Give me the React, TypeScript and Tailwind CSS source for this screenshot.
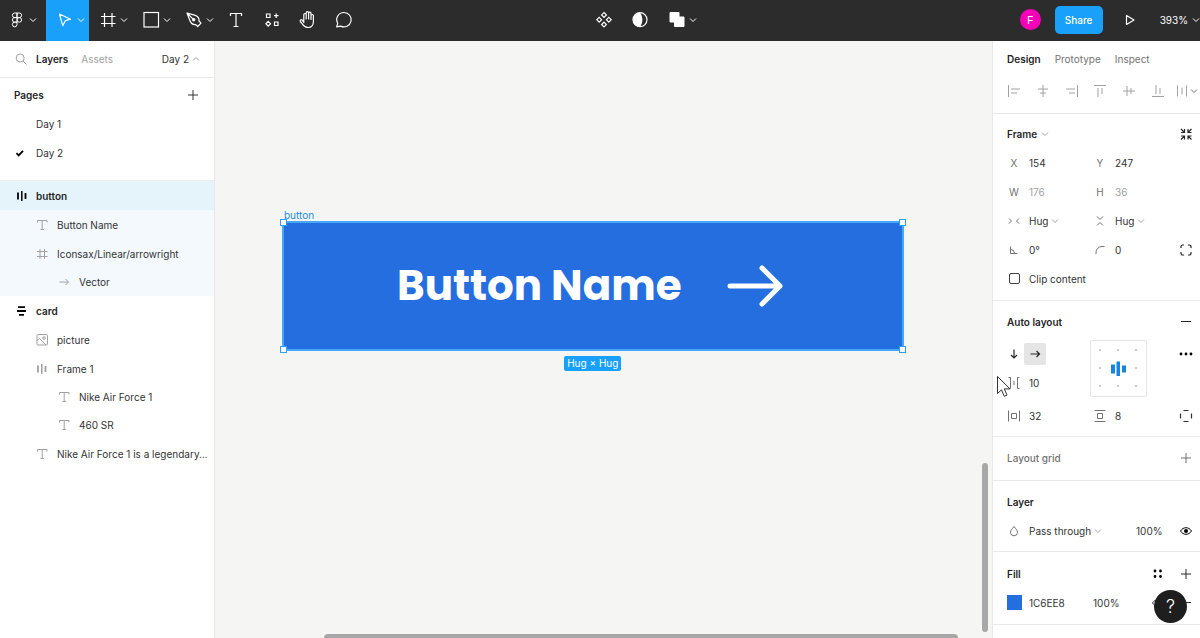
import React from 'react'
import clsx from 'clsx'

type IconProps = { className?: string }

function Chevron({ className = 'text-neutral-400', up = false }: IconProps & { up?: boolean }) {
  return (
    <svg viewBox="0 0 8 8" className={clsx('w-2 h-2 shrink-0', className)} fill="none" stroke="currentColor">
      <path d={up ? 'M1 5.500 4 2.500l3 3' : 'M1 2.500 4 5.500l3-3'} />
    </svg>
  )
}

function Icon({ className, children }: IconProps & { children: React.ReactNode }) {
  return (
    <svg viewBox="0 0 20 20" className={clsx('w-5 h-5 shrink-0', className)} fill="none" stroke="currentColor">
      {children}
    </svg>
  )
}

const TextIcon = ({ className }: IconProps) => (
  <Icon className={className}>
    <path d="M5.500 7.500v-2h9.500v2M10.200 5.500v9M8.500 14.500h3.500" />
  </Icon>
)

const HashIcon = ({ className }: IconProps) => (
  <Icon className={className}>
    <path d="M8 5v10M12.500 5v10M5 7.500h10.500M5 12.500h10.500" />
  </Icon>
)

const BarsIcon = ({ className }: IconProps) => (
  <Icon className={className}>
    <path d="M6 6.500v7M13.500 7v6" strokeWidth="1.800" />
    <path d="M9.800 5v10" strokeWidth="1.500" />
  </Icon>
)

const StackIcon = ({ className }: IconProps) => (
  <Icon className={className}>
    <path d="M6 6.200h7M5 10h9M7 13.800h5" strokeWidth="1.800" />
  </Icon>
)

const ArrowIcon = ({ className }: IconProps) => (
  <Icon className={className}>
    <path d="M5.500 10h9M11.500 7l3 3-3 3" />
  </Icon>
)

const PictureIcon = ({ className }: IconProps) => (
  <Icon className={className}>
    <rect x="5" y="4.500" width="10.500" height="10.500" rx="1" />
    <circle cx="12" cy="8" r="1.300" />
    <path d="M5 10.500l2.500-2 6.500 6.500" />
  </Icon>
)

const PlusIcon = ({ className }: IconProps) => (
  <Icon className={className}>
    <path d="M10 5v10M5 10h10" />
  </Icon>
)

const MinusIcon = ({ className }: IconProps) => (
  <Icon className={className}>
    <path d="M5 9.500h10" />
  </Icon>
)

const EyeIcon = ({ className }: IconProps) => (
  <Icon className={className}>
    <path d="M4.500 10c2.700-4.400 8.300-4.400 11 0-2.700 4.400-8.300 4.400-11 0z" />
    <circle cx="10" cy="10" r="2" fill="currentColor" stroke="none" />
  </Icon>
)

const tools = [
  {
    name: 'Main menu',
    menu: true,
    icon: (
      <>
        <path d="M10 3H7.700a2.300 2.300 0 0 0 0 4.600H10zM10 3h2.300a2.300 2.300 0 0 1 0 4.600H10zM10 7.600H7.700a2.300 2.300 0 0 0 0 4.600H10zM10 12.200H7.700A2.300 2.300 0 1 0 10 14.500z" />
        <circle cx="12.300" cy="9.900" r="2.300" />
      </>
    ),
  },
  { name: 'Move', menu: true, active: true, icon: <path d="M4.500 4l11 5.200-5.200 1.500-2.600 5z" strokeWidth="1.200" strokeLinejoin="round" /> },
  { name: 'Frame', menu: true, icon: <path d="M6.500 3v14M14 3v14M3 6.500h14.500M3 13.500h14.500" strokeWidth="1.200" /> },
  { name: 'Rectangle', menu: true, icon: <rect x="3" y="2.500" width="14.500" height="14.500" strokeWidth="1.200" /> },
  {
    name: 'Pen',
    menu: true,
    icon: (
      <>
        <path d="M3 3l7.500 2.200c3.200 1 4.800 3.300 4.500 5.800l2 2.200-3.300 3.300-2.200-2c-2.500.3-4.800-1.300-5.800-4.500zM3 3l5.800 5.800" strokeWidth="1.200" strokeLinejoin="round" />
        <circle cx="9.700" cy="9.700" r="1.300" fill="currentColor" />
      </>
    ),
  },
  { name: 'Text', icon: <path d="M4.500 6V3.500h11V6M10 3.500v13M7.500 16.500h5" strokeWidth="1.200" /> },
  {
    name: 'Resources',
    icon: (
      <>
        <path d="M4.500 4h3.500v3.500H4.500zM12.500 12h3.500v3.500h-3.500zM14.200 3.500v4.500M12 5.700h4.500" strokeWidth="1.200" />
        <path d="M6.200 11.300l2.300 2.400-2.300 2.400-2.300-2.400z" strokeWidth="1.200" />
      </>
    ),
  },
  {
    name: 'Hand',
    icon: (
      <path
        d="M5.800 10.500V4.700a1.200 1.200 0 0 1 2.400 0V9 2.900a1.200 1.200 0 0 1 2.400 0V9 3.400a1.200 1.200 0 0 1 2.400 0V9.500 5.700a1.200 1.200 0 0 1 2.400 0v5.800c0 4-2 6-5.200 6-3 0-4.200-1.200-5.600-3.200L2.300 11.500c-.6-1.300.8-2.400 1.900-1.500l1.600 2.500z"
        strokeWidth="1.200"
        strokeLinejoin="round"
      />
    ),
  },
  { name: 'Comment', icon: <path d="M10 2.500a7.200 7.200 0 1 1-3.300 13.600L2.700 16.900l1-3.600A7.200 7.200 0 0 1 10 2.500z" strokeWidth="1.200" strokeLinejoin="round" /> },
]

const centerTools = [
  {
    name: 'Create component',
    icon: (
      <path
        d="M10 2.500l2.400 2.400L10 7.300 7.600 4.900zM10 12.100l2.400 2.400-2.400 2.400-2.400-2.400zM5.200 7.300L7.600 9.700l-2.400 2.400L2.800 9.700zM14.800 7.300l2.400 2.400-2.400 2.400-2.400-2.400z"
        strokeWidth="1.200"
      />
    ),
  },
  {
    name: 'Mask',
    icon: (
      <>
        <circle cx="10" cy="9.700" r="7" strokeWidth="1.200" />
        <path d="M10 2.700a7 7 0 0 0 0 14c3.200-3.500 3.200-10.500 0-14z" fill="currentColor" stroke="none" />
      </>
    ),
  },
  { name: 'Boolean groups', menu: true, icon: <path d="M3 2.500h9v4.500h5V16.500H7.500v-4.500H3z" fill="currentColor" strokeWidth="1" /> },
]

function ToolButton({ tool, first }: { tool: any; first?: boolean }) {
  return (
    <button
      aria-label={tool.name}
      className={clsx(
        'h-full flex items-center shrink-0 gap-0.5 pb-px',
        tool.menu ? (first ? 'w-[46px] pl-[7px]' : 'w-[43px] pl-[9px]') : 'w-9 justify-center',
        tool.active && 'bg-[#18a0fb]'
      )}
    >
      <Icon>{tool.icon}</Icon>
      {tool.menu && <Chevron className="text-white" />}
    </button>
  )
}

function Toolbar() {
  return (
    <header className="h-[41px] shrink-0 bg-[#2c2c2c] text-white flex items-center">
      <div className="h-full w-[calc(50%-14px)] flex">
        {tools.map((tool, index) => (
          <ToolButton key={tool.name} tool={tool} first={index === 0} />
        ))}
      </div>
      <div className="h-full flex">
        {centerTools.map((tool) => (
          <ToolButton key={tool.name} tool={tool} />
        ))}
      </div>
      <div className="h-full ml-auto pb-0.5 flex items-center">
        <span className="w-[21px] h-[21px] rounded-full bg-[#f500b8] flex items-center justify-center text-[11px]">F</span>
        <button className="ml-3.5 w-12 h-7 rounded-[5px] bg-[#18a0fb] font-medium">Share</button>
        <button aria-label="Present" className="ml-[17px] w-5">
          <Icon>
            <path d="M6.500 5.500v9l7.500-4.500z" strokeWidth="1.200" strokeLinejoin="round" />
          </Icon>
        </button>
        <button className="ml-5 flex items-center gap-1">
          393%
          <Chevron className="text-white" />
        </button>
      </div>
    </header>
  )
}

const layers = [
  { name: 'button', level: 0, icon: BarsIcon, tint: 'bg-[#e5f4fb]' },
  { name: 'Button Name', level: 1, icon: TextIcon, tint: 'bg-[#f3f9fd]' },
  { name: 'Iconsax/Linear/arrowright', level: 1, icon: HashIcon, tint: 'bg-[#f3f9fd]' },
  { name: 'Vector', level: 2, icon: ArrowIcon, tint: 'bg-[#f3f9fd]' },
  { name: 'card', level: 0, icon: StackIcon },
  { name: 'picture', level: 1, icon: PictureIcon },
  { name: 'Frame 1', level: 1, icon: BarsIcon },
  { name: 'Nike Air Force 1', level: 2, icon: TextIcon },
  { name: '460 SR', level: 2, icon: TextIcon },
  { name: 'Nike Air Force 1 is a legendary...', level: 1, icon: TextIcon },
]

const levelStyles = ['h-[29px] pl-3 font-semibold text-neutral-800', 'h-[29px] pl-8', 'h-7 pl-[54px]']

function LayersPanel() {
  return (
    <aside className="w-[215px] shrink-0 bg-white border-r border-[#e8e8e8]">
      <div className="h-[37px] flex items-center pl-3 pr-3.5 border-b border-[#e8e8e8]">
        <Icon className="text-neutral-400">
          <circle cx="8.200" cy="9" r="4" />
          <path d="M11 12l3.500 3.500" />
        </Icon>
        <button className="ml-1 font-semibold text-neutral-800">Layers</button>
        <button className="ml-[13px] text-neutral-400">Assets</button>
        <button className="ml-auto flex items-center gap-[3px]">
          Day 2 <Chevron up />
        </button>
      </div>

      <div className="pt-0.5 pb-[13px] border-b border-[#e8eef2]">
        <div className="h-[29px] flex items-center justify-between pl-3.5 pr-[11px]">
          <h2 className="font-semibold text-neutral-800">Pages</h2>
          <button aria-label="Add page">
            <PlusIcon />
          </button>
        </div>
        <button className="w-full h-[29px] flex items-center pl-9">Day 1</button>
        <button className="w-full h-[29px] flex items-center pl-2.5 gap-1.5">
          <Icon className="text-black">
            <path d="M6.500 10.200l2.200 2.200 4.300-4.500" strokeWidth="1.800" />
          </Icon>
          Day 2
        </button>
      </div>

      <ul>
        {layers.map((layer) => (
          <li key={layer.name} className={clsx('flex items-center whitespace-nowrap', levelStyles[layer.level], layer.tint)}>
            <layer.icon className={layer.level === 0 ? 'text-black' : 'text-neutral-400'} />
            <span className={layer.level === 0 ? 'ml-1' : 'ml-[5px]'}>{layer.name}</span>
          </li>
        ))}
      </ul>
    </aside>
  )
}

const handles = ['-left-1 -top-1', '-right-1 -top-1', '-left-1 -bottom-1', '-right-1 -bottom-1']

function Canvas() {
  return (
    <main className="relative flex-1 min-w-0 overflow-hidden bg-[#f5f5f4]">
      <div className="absolute left-[67px] top-[180px]">
        <span className="absolute left-0.5 -top-[13px] leading-[14px] text-[#1b8fe0]">button</span>
        <div className="relative flex items-center gap-[45px] h-[130px] pl-[113px] pr-[119px] bg-[#246ee0] border-2 border-[#45a8f8]">
          <span className="font-[Poppins,Inter,sans-serif] font-bold text-[42px] leading-none text-white whitespace-nowrap">
            Button Name
          </span>
          <svg viewBox="0 0 56 42" className="w-14 h-[42px] shrink-0" fill="none" stroke="white" strokeWidth="5" strokeLinecap="round" strokeLinejoin="round">
            <path d="M3 21h50M35 3l18 18-18 18" />
          </svg>
          {handles.map((place) => (
            <span key={place} className={clsx('absolute w-[7px] h-[7px] bg-white border border-[#2fa0f8]', place)} />
          ))}
        </div>
        <div className="mt-[5px] flex justify-center">
          <span className="px-[3px] h-[15px] leading-[15px] rounded-xs bg-[#18a0fb] text-white">Hug × Hug</span>
        </div>
      </div>
      <div className="absolute right-1 top-[422px] bottom-1.5 w-1.5 rounded-full bg-[#a8a8a8]" />
      <div className="absolute left-[109px] right-[34px] bottom-0 h-1 rounded-t-full bg-[#a8a8a8]" />
    </main>
  )
}

const alignments = [
  { name: 'Align left', path: 'M4.500 4v12M7 8h9M7 12h6' },
  { name: 'Align horizontal centers', path: 'M10 4v12M5 8h10M7 12h6' },
  { name: 'Align right', path: 'M15.500 4v12M4 8h9M7 12h6' },
  { name: 'Align top', path: 'M4 4.500h12M8 7v9M12 7v6' },
  { name: 'Align vertical centers', path: 'M4 10h12M8 5v10M12 7v6' },
  { name: 'Align bottom', path: 'M4 15.500h12M8 4v9M12 7v6' },
]

function Field({ label, value, icon, muted }: { label: string; value: string; icon?: React.ReactNode; muted?: boolean }) {
  return (
    <label className="flex items-center min-w-0">
      <span className="w-7 shrink-0 flex justify-center text-neutral-500">{icon ?? label}</span>
      <input
        aria-label={label}
        defaultValue={value}
        disabled={muted}
        className={clsx('ml-px w-0 flex-1 bg-transparent outline-none', muted && 'text-neutral-400')}
      />
    </label>
  )
}

function SelectField({ label, options, icon }: { label: string; options: string[]; icon: React.ReactNode }) {
  return (
    <label className="flex items-center">
      <span className="w-7 shrink-0 flex justify-center text-neutral-500">{icon}</span>
      <select aria-label={label} className="ml-px appearance-none field-sizing-content bg-transparent outline-none">
        {options.map((option) => (
          <option key={option}>{option}</option>
        ))}
      </select>
      <Chevron className="ml-[3px] text-neutral-400" />
    </label>
  )
}

function Row({ children }: { children: React.ReactNode }) {
  return <div className="h-[29px] grid grid-cols-[1fr_1fr_28px] items-center">{children}</div>
}

function Section({ className = 'py-1.5', children }: { className?: string; children: React.ReactNode }) {
  return <section className={clsx('pl-[7px] border-b border-[#e8e8e8]', className)}>{children}</section>
}

function IconButton({ label, children }: { label: string; children: React.ReactNode }) {
  return (
    <button aria-label={label} className="w-7 h-7 flex items-center justify-center">
      {children}
    </button>
  )
}

function Heading({ title, children }: { title: string; children?: React.ReactNode }) {
  return (
    <div className="h-[29px] pl-[7px] flex items-center">
      <h2 className="font-semibold text-neutral-800 mr-auto">{title}</h2>
      {children}
    </div>
  )
}

function AlignmentBox() {
  return (
    <div className="ml-1 w-[57px] h-[57px] border border-[#e5e5e5] rounded-xs">
      <svg viewBox="0 0 55 55" className="w-full h-full">
        {[9, 27, 45].map((y) =>
          [9, 27, 45].map((x) => <circle key={`${x}-${y}`} cx={x} cy={y} r="0.9" fill={x === 27 && y === 27 ? 'none' : '#b3b3b3'} />)
        )}
        <path d="M20 23.500h4v9h-4zM25.500 20.500h3.500v14.500h-3.500zM31 24.500h4v7h-4z" fill="#1684e0" />
      </svg>
    </div>
  )
}

function DesignPanel() {
  return (
    <aside className="w-52 shrink-0 bg-white border-l border-[#e8e8e8] overflow-hidden">
      <div className="border-b border-[#e8e8e8]">
        <div className="h-9 pl-3.5 flex items-center gap-3.5 text-neutral-500">
          <button className="font-semibold text-neutral-800">Design</button>
          <button>Prototype</button>
          <button>Inspect</button>
        </div>
        <div className="h-9 pl-[7px] pb-2 flex items-center text-neutral-400">
          {alignments.map((item) => (
            <button key={item.name} aria-label={item.name} className="flex-1 flex justify-center">
              <Icon>
                <path d={item.path} />
              </Icon>
            </button>
          ))}
          <button aria-label="Tidy up" className="w-7 flex items-center">
            <Icon>
              <path d="M5.500 4.500v11M10 6.500v7M14.500 4.500v11" />
            </Icon>
            <Chevron className="-ml-0.5 text-neutral-500" />
          </button>
        </div>
      </div>

      <Section className="pt-[5px] pb-[7px]">
        <div className="h-[29px] pl-[7px] flex items-center">
          <button className="mr-auto flex items-center gap-1 font-semibold text-neutral-800">
            Frame <Chevron />
          </button>
          <IconButton label="Resize to fit">
            <Icon className="text-neutral-800">
              <path d="M5 5l3 3M15.500 5l-3 3M5 15.500l3-3M15.500 15.500l-3-3M8.500 5v3.500H5M12 5v3.500h3.500M8.500 15.500V12H5M12 15.500V12h3.500" strokeWidth="1.200" />
            </Icon>
          </IconButton>
        </div>
        <Row>
          <Field label="X" value="154" />
          <Field label="Y" value="247" />
        </Row>
        <Row>
          <Field label="W" value="176" muted />
          <Field label="H" value="36" muted />
        </Row>
        <Row>
          <SelectField label="Horizontal resizing" options={['Hug', 'Fixed']} icon={<Icon><path d="M5 7.500L7.500 10 5 12.500M15 7.500L12.500 10l2.500 2.500" /></Icon>} />
          <SelectField label="Vertical resizing" options={['Hug', 'Fixed']} icon={<Icon><path d="M7 5.500l3 3 3-3M7 14.500l3-3 3 3" /></Icon>} />
        </Row>
        <Row>
          <Field label="Rotation" value="0°" icon={<Icon><path d="M6.500 6.500v7h7M6.500 9.500a4 4 0 0 1 4 4" /></Icon>} />
          <Field label="Corner radius" value="0" icon={<Icon><path d="M6 14v-1.500a6 6 0 0 1 6-6h2.500" /></Icon>} />
          <IconButton label="Independent corners">
            <Icon className="text-neutral-800">
              <path d="M5 8V6.500A1.500 1.500 0 0 1 6.500 5H8M12 5h1.500A1.500 1.500 0 0 1 15 6.500V8M15 12v1.500a1.500 1.500 0 0 1-1.500 1.500H12M8 15H6.500A1.500 1.500 0 0 1 5 13.500V12" strokeWidth="1.200" />
            </Icon>
          </IconButton>
        </Row>
        <label className="h-[29px] pl-[9px] flex items-center gap-[9px]">
          <input type="checkbox" className="appearance-none w-[11px] h-[11px] border border-neutral-700 rounded-xs" />
          Clip content
        </label>
      </Section>

      <Section>
        <Heading title="Auto layout">
          <IconButton label="Remove auto layout">
            <MinusIcon className="text-neutral-800" />
          </IconButton>
        </Heading>
        <div className="my-1 grid grid-cols-[1fr_1fr_28px] items-start">
          <div>
            <div className="h-7 pl-[3px] flex items-center">
              <button aria-label="Vertical direction" className="w-[21px] h-[21px] flex items-center justify-center text-neutral-800">
                <Icon>
                  <path d="M10 5.500v8.500M7 11l3 3 3-3" strokeWidth="1.200" />
                </Icon>
              </button>
              <button aria-label="Horizontal direction" className="w-[22px] h-[22px] flex items-center justify-center rounded-xs bg-[#e5e5e5] text-neutral-800">
                <Icon>
                  <path d="M5.500 10h9M11.500 7l3 3-3 3" strokeWidth="1.200" />
                </Icon>
              </button>
            </div>
            <div className="h-[29px] grid items-center">
              <Field label="Spacing between items" value="10" icon={<Icon><path d="M4.500 4.500h2v11h-2M15.500 4.500h-2v11h2M10 8v4" /></Icon>} />
            </div>
          </div>
          <AlignmentBox />
          <IconButton label="Advanced layout">
            <Icon className="text-black">
              <path d="M5 10h.01M10 10h.01M15 10h.01" strokeWidth="2.800" strokeLinecap="round" />
            </Icon>
          </IconButton>
        </div>
        <Row>
          <Field label="Horizontal padding" value="32" icon={<Icon><path d="M4.500 4.500v11M15.500 4.500v11M7.500 7.500h5v5h-5z" /></Icon>} />
          <Field label="Vertical padding" value="8" icon={<Icon><path d="M4.500 4.500h11M4.500 15.500h11M7.500 7.500h5v5h-5z" /></Icon>} />
          <IconButton label="Independent padding">
            <Icon>
              <path d="M7.500 4.500h5M7.500 15.500h5M4.500 7.500v5M15.500 7.500v5" strokeWidth="1.200" />
            </Icon>
          </IconButton>
        </Row>
      </Section>

      <Section className="pt-1.5 pb-2">
        <div className="h-[29px] pl-[7px] flex items-center justify-between">
          <h2 className="font-medium text-neutral-500">Layout grid</h2>
          <IconButton label="Add layout grid">
            <PlusIcon className="text-neutral-500" />
          </IconButton>
        </div>
      </Section>

      <Section>
        <Heading title="Layer" />
        <div className="h-[29px] flex items-center">
          <SelectField label="Blend mode" options={['Pass through', 'Normal']} icon={<Icon><path d="M10 5.500c2 2.500 3.500 4 3.500 5.800a3.500 3.500 0 0 1-7 0C6.500 9.500 8 8 10 5.500z" /></Icon>} />
          <input aria-label="Layer opacity" defaultValue="100%" className="ml-auto mr-2 w-7 bg-transparent outline-none" />
          <IconButton label="Toggle layer visibility">
            <EyeIcon className="text-black" />
          </IconButton>
        </div>
      </Section>

      <Section className="py-[7px]">
        <Heading title="Fill">
          <IconButton label="Styles">
            <Icon className="text-black">
              <path d="M7 7h.01M12.500 7h.01M7 12.500h.01M12.500 12.500h.01" strokeWidth="2.800" strokeLinecap="round" />
            </Icon>
          </IconButton>
          <IconButton label="Add fill">
            <PlusIcon className="text-neutral-800" />
          </IconButton>
        </Heading>
        <div className="h-[29px] pl-[7px] flex items-center">
          <button aria-label="Fill color" className="w-[15px] h-[15px] bg-[#246ee0]" />
          <input aria-label="Fill hex" defaultValue="1C6EE8" className="ml-[7px] w-16 bg-transparent outline-none" />
          <input aria-label="Fill opacity" defaultValue="100%" className="mr-auto w-8 bg-transparent outline-none" />
          <IconButton label="Toggle fill visibility">
            <EyeIcon />
          </IconButton>
          <IconButton label="Remove fill">
            <MinusIcon />
          </IconButton>
        </div>
      </Section>
    </aside>
  )
}

function App() {
  return (
    <div className="relative h-screen overflow-hidden flex flex-col font-[Inter,sans-serif] text-[10px] leading-4 text-[#333]">
      <Toolbar />
      <div className="flex-1 min-h-0 flex">
        <LayersPanel />
        <Canvas />
        <DesignPanel />
      </div>

      <button aria-label="Help" className="absolute right-[13px] bottom-[15px] w-[33px] h-[33px] rounded-full bg-[#1e1e1e] text-white text-lg font-light">
        ?
      </button>

      {/* mouse pointer */}
      <svg viewBox="0 0 16 24" className="absolute right-[188px] top-[375px] w-4 h-6" fill="white" stroke="#333" strokeLinejoin="round">
        <path d="M1.500 1.500v17l4-3.700 2.700 6.500 2.800-1.200-2.700-6.200h5.700z" />
      </svg>
    </div>
  )
}

export default App
